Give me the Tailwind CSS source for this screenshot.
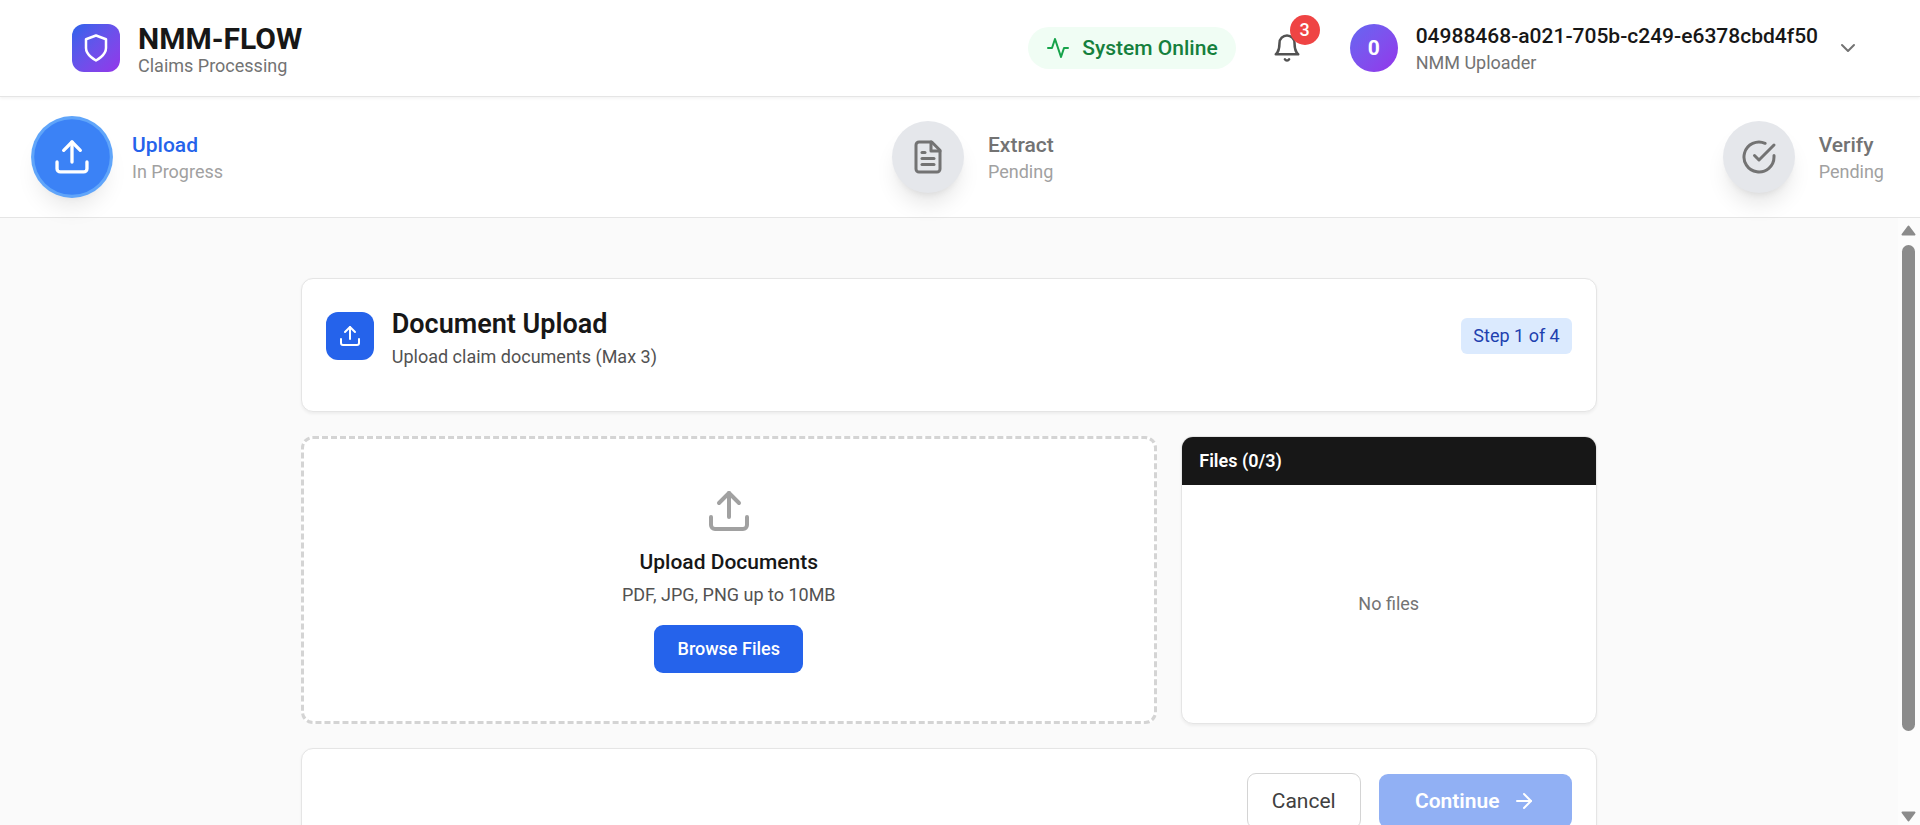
<!DOCTYPE html>
<html lang="en">
<head>
<meta charset="utf-8">
<title>NMM-FLOW Claims Processing</title>
<script src="https://cdn.jsdelivr.net/npm/@tailwindcss/browser@4"></script>
</head>
<body class="h-screen overflow-hidden bg-neutral-50 font-['Roboto',sans-serif] text-neutral-900">
<svg class="hidden">
  <symbol id="upload" viewBox="0 0 24 24" fill="none" stroke="currentColor" stroke-width="2" stroke-linecap="round" stroke-linejoin="round"><path d="M12 3v12"/><path d="m17 8-5-5-5 5"/><path d="M21 15v4a2 2 0 0 1-2 2H5a2 2 0 0 1-2-2v-4"/></symbol>
</svg>
<div class="flex h-screen flex-col">
  <header class="relative z-20 flex h-[97px] shrink-0 items-center justify-between border-b border-[#e5e5e5] bg-white pr-[48px] pl-[72px] shadow-[0_1.5px_3px_rgba(0,0,0,0.05)]">
    <div class="flex items-center gap-[18px]">
      <div class="flex size-[48px] items-center justify-center rounded-[12px] bg-linear-to-br from-[#2563eb] to-[#9333ea] text-white">
        <svg class="size-[30px]" viewBox="0 0 24 24" fill="none" stroke="currentColor" stroke-width="2" stroke-linecap="round" stroke-linejoin="round"><path d="M12 22s8-4 8-10V5l-8-3-8 3v7c0 6 8 10 8 10"/></svg>
      </div>
      <div>
        <h1 class="text-[30px] leading-[37px] font-bold">NMM-FLOW</h1>
        <p class="mb-[3px] text-[18px] leading-[17px] text-neutral-500">Claims Processing</p>
      </div>
    </div>
    <div class="flex items-center gap-[24px]">
      <div class="flex h-[42px] items-center gap-[12px] rounded-full bg-[#f0fdf4] px-[18px] text-[#15803d]">
        <svg class="size-[24px] text-[#16a34a]" viewBox="0 0 24 24" fill="none" stroke="currentColor" stroke-width="2" stroke-linecap="round" stroke-linejoin="round"><path d="M22 12h-4l-3 9L9 3l-3 9H2"/></svg>
        <span class="text-[21px] leading-[30px] font-medium">System Online</span>
      </div>
      <button class="relative flex size-[54px] items-center justify-center text-neutral-600">
        <svg class="size-[30px]" viewBox="0 0 24 24" fill="none" stroke="currentColor" stroke-width="2" stroke-linecap="round" stroke-linejoin="round"><path d="M6 8a6 6 0 0 1 12 0c0 7 3 9 3 9H3s3-2 3-9"/><path d="M10.300 21a1.940 1.940 0 0 0 3.400 0"/></svg>
        <span class="absolute -top-[6px] -right-[6px] flex size-[30px] items-center justify-center rounded-full bg-[#ef4444] text-[18px] leading-[24px] font-medium text-white">3</span>
      </button>
      <button class="flex items-center gap-[18px] px-[12px] text-left">
        <span class="flex size-[48px] items-center justify-center rounded-full bg-linear-to-br from-[#6366f1] to-[#9333ea] text-[21px] leading-[30px] font-bold text-white">0</span>
        <span class="block">
          <span class="block text-[21px] leading-[30px] font-medium">04988468-a021-705b-c249-e6378cbd4f50</span>
          <span class="block text-[18px] leading-[24px] text-neutral-500">NMM Uploader</span>
        </span>
        <svg class="size-[24px] text-neutral-500" viewBox="0 0 24 24" fill="none" stroke="currentColor" stroke-width="2" stroke-linecap="round" stroke-linejoin="round"><path d="m6 9 6 6 6-6"/></svg>
      </button>
    </div>
  </header>

  <nav class="relative z-10 flex h-[121px] shrink-0 items-center justify-between border-b border-[#e5e5e5] bg-white px-[36px]">
    <div class="flex items-center gap-[24px]">
      <div class="flex size-[72px] scale-105 items-center justify-center rounded-full bg-[#3b82f6] text-white shadow-[0_0_0_3px_#60a5fa,0_15px_22.5px_-4.5px_rgba(0,0,0,0.1),0_6px_9px_-6px_rgba(0,0,0,0.1)]">
        <svg class="size-[38px]"><use href="#upload"/></svg>
      </div>
      <div>
        <p class="text-[21px] leading-[30px] font-medium text-[#2563eb]">Upload</p>
        <p class="text-[18px] leading-[24px] text-neutral-400">In Progress</p>
      </div>
    </div>
    <div class="flex items-center gap-[24px]">
      <div class="flex size-[72px] items-center justify-center rounded-full bg-[#e5e7eb] text-neutral-500 shadow-[0_15px_22.5px_-4.5px_rgba(0,0,0,0.1),0_6px_9px_-6px_rgba(0,0,0,0.1)]">
        <svg class="size-[36px]" viewBox="0 0 24 24" fill="none" stroke="currentColor" stroke-width="2" stroke-linecap="round" stroke-linejoin="round"><path d="M14.500 2H6a2 2 0 0 0-2 2v16a2 2 0 0 0 2 2h12a2 2 0 0 0 2-2V7.500L14.500 2z"/><path d="M14 2v6h6"/><path d="M10 9H8"/><path d="M16 13H8"/><path d="M16 17H8"/></svg>
      </div>
      <div>
        <p class="text-[21px] leading-[30px] font-medium text-neutral-500">Extract</p>
        <p class="text-[18px] leading-[24px] text-neutral-400">Pending</p>
      </div>
    </div>
    <div class="flex items-center gap-[24px]">
      <div class="flex size-[72px] items-center justify-center rounded-full bg-[#e5e7eb] text-neutral-500 shadow-[0_15px_22.5px_-4.5px_rgba(0,0,0,0.1),0_6px_9px_-6px_rgba(0,0,0,0.1)]">
        <svg class="size-[36px]" viewBox="0 0 24 24" fill="none" stroke="currentColor" stroke-width="2" stroke-linecap="round" stroke-linejoin="round"><path d="M22 11.080V12a10 10 0 1 1-5.930-9.140"/><path d="m9 11 3 3L22 4"/></svg>
      </div>
      <div>
        <p class="text-[21px] leading-[30px] font-medium text-neutral-500">Verify</p>
        <p class="text-[18px] leading-[24px] text-neutral-400">Pending</p>
      </div>
    </div>
  </nav>

  <div class="flex min-h-0 flex-1">
    <main class="min-w-0 flex-1 overflow-hidden pt-[60px]">
      <div class="mx-auto flex w-[1296px] flex-col gap-[24px]">
        <section class="flex h-[134px] items-start justify-between rounded-[12px] border border-[#e5e5e5] bg-white p-[24px] shadow-[0_1.5px_3px_rgba(0,0,0,0.05)]">
          <div class="flex items-center gap-[18px]">
            <div class="flex size-[48px] items-center justify-center rounded-[12px] bg-[#2563eb] text-white">
              <svg class="size-[24px]"><use href="#upload"/></svg>
            </div>
            <div>
              <h2 class="text-[27px] leading-[42px] font-semibold">Document Upload</h2>
              <p class="text-[18px] leading-[24px] text-neutral-600">Upload claim documents (Max 3)</p>
            </div>
          </div>
          <span class="mt-[15px] rounded-[6px] bg-[#dbeafe] px-[12px] py-[6px] text-[18px] leading-[24px] text-[#1e40af]">Step 1 of 4</span>
        </section>

        <div class="grid h-[288px] grid-cols-3 gap-[24px]">
          <section class="col-span-2 flex flex-col items-center justify-center rounded-[12px] border-[3px] border-dashed border-neutral-300 bg-white">
            <svg class="size-[48px] text-neutral-400"><use href="#upload"/></svg>
            <h3 class="mt-[12px] text-[21px] leading-[30px] font-medium">Upload Documents</h3>
            <p class="mt-[6px] text-[18px] leading-[24px] text-neutral-600">PDF, JPG, PNG up to 10MB</p>
            <button class="mt-[18px] h-[48px] w-[149px] rounded-[9px] bg-[#2563eb] text-[18px] leading-[24px] font-medium text-white">Browse Files</button>
          </section>
          <section class="flex flex-col overflow-hidden rounded-[12px] border border-[#e5e5e5] bg-white shadow-[0_1.5px_3px_rgba(0,0,0,0.05)]">
            <h3 class="flex h-[48px] shrink-0 items-center bg-neutral-900 px-[17.5px] text-[18px] leading-[24px] font-semibold text-white">Files (0/3)</h3>
            <div class="flex flex-1 items-center justify-center text-[18px] leading-[24px] text-neutral-500">No files</div>
          </section>
        </div>

        <section class="flex items-center justify-end gap-[18px] rounded-[12px] border border-[#e5e5e5] bg-white p-[24px] shadow-[0_1.5px_3px_rgba(0,0,0,0.05)]">
          <button class="h-[56px] w-[114px] rounded-[9px] border border-neutral-300 text-[21px] leading-[30px] text-neutral-700">Cancel</button>
          <button class="flex h-[54px] w-[193px] items-center justify-center gap-[12px] rounded-[9px] bg-[#2563eb] text-[21px] leading-[30px] font-semibold text-white opacity-50">Continue
            <svg class="size-[24px]" viewBox="0 0 24 24" fill="none" stroke="currentColor" stroke-width="2" stroke-linecap="round" stroke-linejoin="round"><path d="M5 12h14"/><path d="m12 5 7 7-7 7"/></svg>
          </button>
        </section>
      </div>
    </main>
    <div class="flex w-[22.5px] shrink-0 flex-col items-center bg-[#fcfcfc] pt-[7px] pb-[3px] text-[#8b8b8b]">
      <svg class="h-[11px] w-[15px] shrink-0" viewBox="0 0 15 11"><path d="M7.500 1.500 13.500 9.500H1.500Z" fill="currentColor" stroke="currentColor" stroke-width="2" stroke-linejoin="round"/></svg>
      <div class="mt-[9px] h-[486px] w-[13px] shrink-0 rounded-full bg-[#8b8b8b]"></div>
      <svg class="mt-auto h-[11px] w-[15px] shrink-0" viewBox="0 0 15 11"><path d="M7.500 9.500 13.500 1.500H1.500Z" fill="currentColor" stroke="currentColor" stroke-width="2" stroke-linejoin="round"/></svg>
    </div>
  </div>
</div>
</body>
</html>
